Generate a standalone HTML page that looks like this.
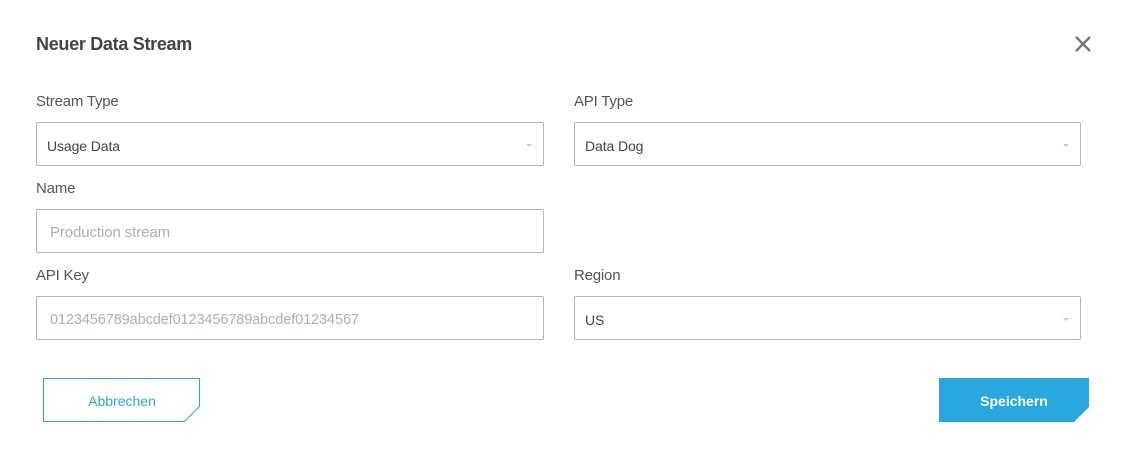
<!DOCTYPE html>
<html><head><style>
body{margin:0;width:1126px;height:451px;background:#fff;font-family:"Liberation Sans",sans-serif;position:relative;overflow:hidden}
.a{position:absolute}
.t{left:36px;top:34px;font-size:18px;font-weight:bold;color:#444;letter-spacing:-0.3px}
.l{font-size:15px;color:#555;letter-spacing:-0.2px}
.i{border:1px solid #b5b5b5;border-radius:2px;height:42px;box-sizing:content-box;font-size:14px;color:#444;line-height:46px;padding-left:10px;letter-spacing:-0.1px}
.i.p{color:#a9b0b8;font-size:15px;padding-left:13px}
.arr{position:absolute;right:11px;top:21px;width:0;height:0;border-left:3px solid transparent;border-right:3px solid transparent;border-top:3px solid #ccc}
</style></head><body>
<div class="a t">Neuer Data Stream</div>
<svg class="a" style="left:1074px;top:35px" width="18" height="18" viewBox="0 0 18 18"><path d="M2 2L16 16M16 2L2 16" stroke="#777" stroke-width="2.4"/></svg>
<div class="a l" style="left:36px;top:93px">Stream Type</div>
<div class="a l" style="left:574px;top:93px">API Type</div>
<div class="a i" style="left:36px;top:122px;width:496px">Usage Data<span class="arr"></span></div>
<div class="a i" style="left:574px;top:122px;width:495px">Data Dog<span class="arr"></span></div>
<div class="a l" style="left:36px;top:180px">Name</div>
<div class="a i p" style="left:36px;top:209px;width:493px">Production stream</div>
<div class="a l" style="left:36px;top:267px">API Key</div>
<div class="a l" style="left:574px;top:267px">Region</div>
<div class="a i p" style="left:36px;top:296px;width:493px;font-size:14.5px">0123456789abcdef0123456789abcdef01234567</div>
<div class="a i" style="left:574px;top:296px;width:495px">US<span class="arr"></span></div>
<svg class="a" style="left:43px;top:378px" width="158" height="44"><path d="M0.5 0.5H156.5V28.5L141.5 43.5H0.5Z" fill="#fff" stroke="#29a8e0"/><text x="79" y="28" text-anchor="middle" font-family="Liberation Sans" font-size="14" fill="#29a8e0">Abbrechen</text></svg>
<svg class="a" style="left:939px;top:378px" width="150" height="44"><path d="M0 0H150V29L135 44H0Z" fill="#29a8e0"/><text x="75" y="28" text-anchor="middle" font-family="Liberation Sans" font-size="14" font-weight="bold" fill="#fff">Speichern</text></svg>
</body></html>
